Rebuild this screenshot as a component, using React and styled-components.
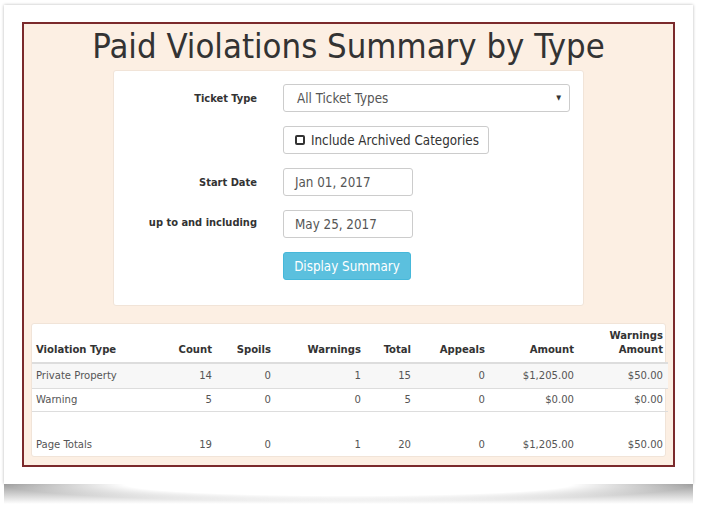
import React from 'react';
import styled, { createGlobalStyle } from 'styled-components';

const GlobalStyle = createGlobalStyle`
  html, body {
    margin: 0;
    padding: 0;
    background: #fff;
  }
  body {
    font-family: "DejaVu Sans Condensed", "DejaVu Sans", Verdana, sans-serif;
    font-stretch: condensed;
    color: #333;
  }
`;

const Page = styled.div`
  width: 689px;
  padding: 5px 0 0 4px;
`;

const PhotoCard = styled.div`
  background: #fff;
  padding: 17px 18px;
  box-shadow: 0 0 3px rgba(0, 0, 0, 0.28);
`;

const CurlShadow = styled.div`
  height: 20px;
  background:
    radial-gradient(ellipse 50% 90% at 50% 0%, #fff 65%, rgba(255, 255, 255, 0) 100%),
    linear-gradient(to bottom, #9d9d9d, rgba(255, 255, 255, 0));
`;

const Frame = styled.div`
  border: 2px solid #7b2a2c;
  background: #fcefe3;
  padding: 0 7px 8px;
`;

const Title = styled.h1`
  margin: 0;
  height: 46px;
  font-size: 34.4px;
  line-height: 44px;
  font-weight: normal;
  text-align: center;
  color: #333;
`;

const FormPanel = styled.div`
  width: 471px;
  box-sizing: border-box;
  margin: 0 auto;
  background: #fff;
  border: 1px solid #f1e4d8;
  border-radius: 3px;
  padding: 13px 13px 25px;
  display: grid;
  grid-template-columns: 130px 287px;
  column-gap: 26px;
  row-gap: 14px;
  align-items: center;
`;

const Label = styled.label`
  text-align: right;
  font-weight: bold;
  font-size: 11px;
  color: #333;
  margin-top: ${(p) => p.$shift || 0}px;
`;

const Field = styled.div`
  height: 28px;
  box-sizing: border-box;
  width: ${(p) => p.$w || '100%'};
  border: 1px solid #ccc;
  border-radius: 3px;
  background: #fff;
  display: flex;
  align-items: center;
  padding: 0 ${(p) => (p.$select ? 8 : 11)}px 0 ${(p) => (p.$select ? 13 : 11)}px;
  font-size: 13.3px;
  color: #555;
  justify-content: space-between;
`;

const Caret = styled.span`
  font-size: 7px;
  color: #333;
`;

const CheckButton = styled.div`
  height: 28px;
  box-sizing: border-box;
  width: 206px;
  border: 1px solid #ccc;
  border-radius: 3px;
  background: #fff;
  display: flex;
  align-items: center;
  gap: 6px;
  padding-left: 11px;
  font-size: 13.3px;
  color: #333;
`;

const SquareIcon = styled.span`
  width: 6px;
  height: 6px;
  border: 2px solid #333;
  border-radius: 2px;
`;

const InfoButton = styled.div`
  height: 28px;
  width: 128px;
  box-sizing: border-box;
  background: #5bc0de;
  border: 1px solid #46b8da;
  border-radius: 3px;
  color: #fff;
  font-size: 13.3px;
  display: flex;
  align-items: center;
  justify-content: center;
`;

const Spacer = styled.div``;

const TableCard = styled.div`
  margin-top: 17px;
  background: #fff;
  border: 1px solid #f1e4d8;
  border-radius: 3px;
`;

const Table = styled.table`
  width: 100%;
  table-layout: fixed;
  border-collapse: collapse;
  font-size: 11.2px;
  color: #555;
`;

const Th = styled.th`
  text-align: ${(p) => (p.$left ? 'left' : 'right')};
  vertical-align: bottom;
  font-weight: bold;
  color: #333;
  padding: 0 5px 5px 4px;
  line-height: 14px;
  height: 33px;
  border-bottom: 2px solid #ddd;
`;

const Row = styled.tr`
  background: ${(p) => (p.$striped ? '#f7f7f7' : 'transparent')};
  border-bottom: ${(p) => (p.$line ? '1px solid #ddd' : 'none')};
  height: ${(p) => p.$h || 23}px;
`;

const Td = styled.td`
  text-align: ${(p) => (p.$left ? 'left' : 'right')};
  padding: 0 5px 0 4px;
`;

const columns = [129, 56, 59, 90, 50, 74, 89, 89];

const rows = [
  ['Private Property', '14', '0', '1', '15', '0', '$1,205.00', '$50.00'],
  ['Warning', '5', '0', '0', '5', '0', '$0.00', '$0.00'],
];

const totals = ['Page Totals', '19', '0', '1', '20', '0', '$1,205.00', '$50.00'];

const Cells = ({ data }) =>
  data.map((v, i) => (
    <Td key={i} $left={i === 0}>
      {v}
    </Td>
  ));

export default function App() {
  return (
    <>
      <GlobalStyle />
      <Page>
        <PhotoCard>
          <Frame>
            <Title>Paid Violations Summary by Type</Title>
            <FormPanel>
              <Label>Ticket Type</Label>
              <Field $select>
                All Ticket Types
                <Caret>▼</Caret>
              </Field>

              <Spacer />
              <CheckButton>
                <SquareIcon />
                Include Archived Categories
              </CheckButton>

              <Label>Start Date</Label>
              <Field $w="130px">Jan 01, 2017</Field>

              <Label $shift={-3}>up to and including</Label>
              <Field $w="130px">May 25, 2017</Field>

              <Spacer />
              <InfoButton>Display Summary</InfoButton>
            </FormPanel>

            <TableCard>
              <Table>
                <colgroup>
                  {columns.map((w, i) => (
                    <col key={i} style={{ width: w }} />
                  ))}
                </colgroup>
                <thead>
                  <tr>
                    <Th $left>Violation Type</Th>
                    <Th>Count</Th>
                    <Th>Spoils</Th>
                    <Th>Warnings</Th>
                    <Th>Total</Th>
                    <Th>Appeals</Th>
                    <Th>Amount</Th>
                    <Th>
                      Warnings
                      <br />
                      Amount
                    </Th>
                  </tr>
                </thead>
                <tbody>
                  <Row $striped $line $h={25}>
                    <Cells data={rows[0]} />
                  </Row>
                  <Row $line $h={23}>
                    <Cells data={rows[1]} />
                  </Row>
                  <Row $h={22}>
                    <td colSpan={8} />
                  </Row>
                  <Row $h={23}>
                    <Cells data={totals} />
                  </Row>
                </tbody>
              </Table>
            </TableCard>
          </Frame>
        </PhotoCard>
        <CurlShadow />
      </Page>
    </>
  );
}
